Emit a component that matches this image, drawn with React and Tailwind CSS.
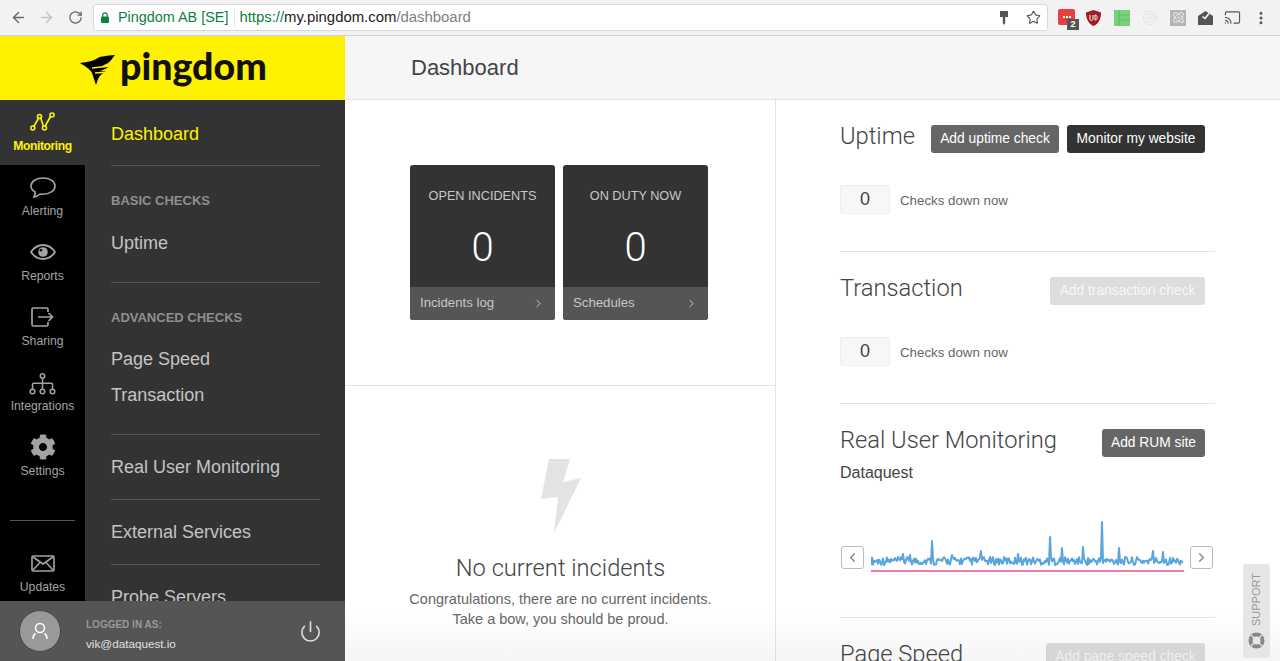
import React from "react";
import { ArrowLeft, ArrowRight, RotateCw, Star, ChevronLeft, ChevronRight, Power, MoreVertical, Cast, Atom, Target } from "lucide-react";
import { FaCog } from "react-icons/fa";

const SANS = "font-['Liberation_Sans',Arial,sans-serif]";

// sparkline data: steady noise plus the big spikes (keys are x offsets)
const spikes = { 32: 14, 39: 13, 61: 27, 81: 13, 110: 17, 147: 14, 179: 31, 191: 20, 212: 21, 231: 46, 248: 20, 282: 17, 292: 16 };
const sparkPoints = [];
for (let i = 0; i < 313; i++) {
  const n = Math.abs(Math.sin(i * 12.9898) * 43758.5453) % 1;
  const h = spikes[i] || 3 + n * 8;
  sparkPoints.push(i + "," + (48 - h).toFixed(1));
}
const sparkPath = sparkPoints.join(" ");

function MonitoringIcon() {
  return (
    <svg width="26" height="20" viewBox="0 0 26 20" fill="none" stroke="currentColor" strokeWidth="1.6">
      <path d="M3.5 15 L9 5.5 M10.5 5.5 L13.5 14.5 M15 14.5 L20.5 4.5" />
      <circle cx="2.8" cy="16" r="2" />
      <circle cx="9.5" cy="4.5" r="2" />
      <circle cx="14.5" cy="16" r="2" />
      <circle cx="22" cy="3" r="2" />
    </svg>
  );
}

function BubbleIcon() {
  return (
    <svg width="26" height="21" viewBox="0 0 26 21" fill="none" stroke="currentColor" strokeWidth="1.6">
      <path d="M13 1C6.5 1 1 4.3 1 9c0 2.7 1.8 4.800 4.300 6.200 0 1.800-.5 3.300-1.300 4.800 2.500-.5 4.500-1.500 6-3 1 .2 2 .3 3 .3 6.500 0 12-3.500 12-8.300S19.500 1 13 1z" />
    </svg>
  );
}

function EyeIcon() {
  return (
    <svg width="26" height="16" viewBox="0 0 26 16" fill="none">
      <path d="M1 8c3-4.500 7-7 12-7s9 2.500 12 7c-3 4.500-7 7-12 7S4 12.500 1 8z" stroke="currentColor" strokeWidth="1.8" />
      <circle cx="13" cy="8" r="4.800" fill="currentColor" />
      <circle cx="11" cy="6.300" r="1.300" fill="#000" />
    </svg>
  );
}

function ShareIcon() {
  return (
    <svg width="23" height="20" viewBox="0 0 23 20" fill="none" stroke="currentColor" strokeWidth="1.7">
      <path d="M17 5V2.500C17 1.600 16.400 1 15.500 1H2.500C1.600 1 1 1.600 1 2.500v15C1 18.400 1.600 19 2.500 19h13c.9 0 1.500-.6 1.500-1.500V15" />
      <path d="M7 10h14.500M17.500 6l4 4-4 4" />
    </svg>
  );
}

function NetworkIcon() {
  return (
    <svg width="27" height="22" viewBox="0 0 27 22" fill="none" stroke="currentColor" strokeWidth="1.500" className="mt-[4px]">
      <circle cx="13.500" cy="3" r="2.200" />
      <path d="M13.500 5.200V16M3.500 16v-4.500c0-.8.500-1.300 1.300-1.300h17.400c.8 0 1.300.5 1.300 1.300V16" />
      <circle cx="3.500" cy="18.500" r="2.300" />
      <circle cx="13.500" cy="18.500" r="2.300" />
      <circle cx="23.500" cy="18.500" r="2.300" />
    </svg>
  );
}

function EnvelopeIcon() {
  return (
    <svg width="24" height="17" viewBox="0 0 24 17" fill="none" stroke="currentColor" strokeWidth="1.600">
      <rect x="1" y="1" width="22" height="15" rx="1" />
      <path d="M2 2l10 7 10-7M2 15l7-7.500M22 15l-7-7.500" />
    </svg>
  );
}

function RailItem({ icon, label, active }) {
  return (
    <div className={`h-[65px] flex flex-col items-center ${active ? "bg-[#333333] text-[#fff200]" : "text-[#a3a3a3]"}`}>
      <div className="h-[39px] pt-[6px] pb-[1px] flex items-center justify-center">{icon}</div>
      <div className={`text-[12.2px] leading-[15px] ${active ? "font-bold tracking-[-0.45px]" : ""}`}>{label}</div>
    </div>
  );
}

function NavRow({ children }) {
  return <div className="h-[36px] pt-[1px] flex items-center text-[18px] text-[#c4c4c4]">{children}</div>;
}

function NavLabel({ children }) {
  return <div className="mt-[16px] h-[36px] pt-[1px] flex items-center text-[13px] font-bold text-[#8f8f8f]">{children}</div>;
}

function StatCard({ title, link }) {
  return (
    <div className="w-[145px] h-[155px] rounded-[3px] overflow-hidden bg-[#333333] flex flex-col">
      <div className="h-[122px] flex flex-col items-center">
        <div className="mt-[23px] text-[12.7px] leading-[17px] text-[#c8c8c8]">{title}</div>
        <div className="mt-[20px] text-[40px] leading-[46px] text-white font-['Roboto',sans-serif] font-light">0</div>
      </div>
      <div className="flex-1 bg-[#555555] pb-[1px] flex items-center justify-between pl-[10px] pr-[10px] text-[13.2px] text-[#c8c8c8]">
        {link}
        <ChevronRight size={13} strokeWidth={1.8} />
      </div>
    </div>
  );
}

function PanelHead({ title, children }) {
  return (
    <div className="h-[28px] pr-[10px] flex items-center">
      <div className="-mt-[5px] text-[23.7px] text-[#444444] font-['Roboto',sans-serif] font-light whitespace-nowrap">{title}</div>
      {children}
    </div>
  );
}

function Btn({ children, color, className }) {
  return (
    <div className={`h-[28px] pt-[1px] rounded-[3px] flex items-center justify-center text-[13.8px] whitespace-nowrap ${color} ${className || ""}`}>
      {children}
    </div>
  );
}

function ChecksDown() {
  return (
    <div className="mt-[32px] flex items-center">
      <div className="w-[50px] h-[29px] rounded-[2px] bg-[#f7f7f7] border border-[#eeeeee] flex items-center justify-center text-[18px] text-[#444444]">0</div>
      <div className="ml-[10px] pt-[2px] text-[13.3px] text-[#666666]">Checks down now</div>
    </div>
  );
}

function ArrowBox({ children, className }) {
  return (
    <div className={`w-[23px] h-[23px] mt-[26px] border border-[#bbbbbb] rounded-[3px] flex items-center justify-center text-[#888888] ${className}`}>
      {children}
    </div>
  );
}

export default function App() {
  return (
    <div className={`relative h-[661px] w-full overflow-hidden flex flex-col bg-white ${SANS}`}>
      {/* browser bar */}
      <div className="h-[36px] shrink-0 bg-[#f2f2f2] border-b border-[#d4d4d4] flex items-center">
        <ArrowLeft size={17} strokeWidth={2} className="ml-[10px] text-[#666666]" />
        <ArrowRight size={17} strokeWidth={2} className="ml-[11px] text-[#c4c4c4]" />
        <RotateCw size={15} strokeWidth={2} className="ml-[13px] text-[#666666]" />
        <div className="ml-[10px] w-[955px] h-[27px] bg-white border border-[#d8d8d8] rounded-[3px] flex items-center">
          <svg width="8" height="11" viewBox="0 0 8 11" className="ml-[7px]">
            <rect x="0" y="4.500" width="8" height="6.500" rx="1" fill="#0b8043" />
            <path d="M1.800 5V3a2.200 2.200 0 0 1 4.400 0v2" fill="none" stroke="#0b8043" strokeWidth="1.200" />
          </svg>
          <span className="ml-[9px] text-[14.4px] text-[#0b8043]">Pingdom AB [SE]</span>
          <span className="ml-[6px] h-[18px] border-l border-[#e4e4e4]"></span>
          <span className="ml-[4px] text-[14.900px] text-[#0b8043]">https://</span>
          <span className="text-[14.900px] text-[#222222]">my.pingdom.com</span>
          <span className="text-[14.900px] text-[#808080]">/dashboard</span>
          <div className="ml-auto flex items-center">
            <svg width="8" height="14" viewBox="0 0 8 14" className="mr-[18px]">
              <path d="M0 0h8v6H5.200v6L4 14l-1.200-2V6H0z" fill="#555555" />
            </svg>
            <Star size={15} strokeWidth={1.8} className="mr-[6px] text-[#555555]" />
          </div>
        </div>
        <div className="relative ml-[10px] w-[17px] h-[16px] -mt-[2px] rounded-[2px] bg-[#e53f3f] flex items-center justify-center gap-[1px]">
          <span className="w-[2px] h-[2px] bg-white"></span>
          <span className="w-[2px] h-[2px] bg-white"></span>
          <span className="w-[2px] h-[2px] bg-white"></span>
          <div className="absolute -right-[4px] -bottom-[5px] w-[12px] h-[11px] bg-[#555555] text-white text-[9px] leading-[11px] text-center font-bold">2</div>
        </div>
        <svg width="15" height="16" viewBox="0 0 15 16" className="ml-[11px]">
          <path d="M7.500 0L15 2.500c0 6-2 11-7.500 13.500C2 13.500 0 8.500 0 2.500z" fill="#a11d21" />
          <path d="M4 5v4c0 2 3 2 3 0V5M9 5v5c3 0 3-5 0-5z" stroke="#fff" strokeWidth="1" fill="none" />
        </svg>
        <svg width="16" height="16" viewBox="0 0 16 16" className="ml-[13px]">
          <rect width="16" height="16" fill="#78d17f" />
          <path d="M5 0v16M5 5h11M5 10h11" stroke="#5fb868" strokeWidth="1" />
        </svg>
        <Target size={16} strokeWidth={1.3} className="ml-[12px] text-[#e2e2e2]" />
        <div className="ml-[12px] w-[16px] h-[16px] bg-[#b5b5b5] flex items-center justify-center">
          <Atom size={13} strokeWidth={1.3} className="text-white" />
        </div>
        <svg width="15" height="14" viewBox="0 0 15 14" className="ml-[12px]">
          <path d="M0 5L7.500 0 15 5v9H0z" fill="#555555" />
          <path d="M4.500 5.500l2.500 2 4-5" fill="none" stroke="#ffffff" strokeWidth="1.500" />
        </svg>
        <Cast size={17} strokeWidth={1.6} className="ml-[11px] text-[#555555]" />
        <MoreVertical size={16} strokeWidth={2.5} className="ml-[12px] text-[#555555]" />
      </div>

      <div className="flex-1 flex min-h-0">
        {/* sidebar */}
        <div className="w-[345px] shrink-0 flex flex-col">
          <div className="h-[64px] shrink-0 bg-[#fff200] flex items-center pl-[80px]">
            <svg width="36" height="30" viewBox="0 0 36 30" className="mt-[4px]">
              <path d="M0 8C8 7 13 6 18 3c3-2 9-2 17-3-3 3-4 7-9 9l-6 3 10-1c-3 2-6 4-10 5l6 0c-3 2-6 4-8 8l-2 6-4-12C10 14 5 11 0 8z" fill="#000000" />
              <path d="M12 13l19-2M15 18l13-1" stroke="#fff200" strokeWidth="1.300" />
            </svg>
            <span className="ml-[4px] -mt-[4px] font-['Lato',sans-serif] font-black text-[37.5px] leading-[46px] text-[#111111]">pingdom</span>
          </div>
          <div className="flex-1 min-h-0 flex overflow-hidden">
            <div className="w-[85px] shrink-0 bg-black">
              <RailItem active label="Monitoring" icon={<MonitoringIcon />} />
              <RailItem label="Alerting" icon={<BubbleIcon />} />
              <RailItem label="Reports" icon={<EyeIcon />} />
              <RailItem label="Sharing" icon={<ShareIcon />} />
              <RailItem label="Integrations" icon={<NetworkIcon />} />
              <RailItem label="Settings" icon={<FaCog size={26} />} />
              <div className="mx-[10px] mt-[30px] border-t border-[#555555]"></div>
              <div className="mt-[20px]">
                <RailItem label="Updates" icon={<EnvelopeIcon />} />
              </div>
            </div>
            <div className="flex-1 bg-[#333333] pl-[26px] pr-[25px]">
              <div className="h-[66px] pt-[3px] border-b border-[#555555] flex items-center text-[18px] text-[#fff200]">Dashboard</div>
              <div className="pb-[21px] border-b border-[#555555]">
                <NavLabel>BASIC CHECKS</NavLabel>
                <div className="mt-[7px]"><NavRow>Uptime</NavRow></div>
              </div>
              <div className="pb-[21px] border-b border-[#555555]">
                <NavLabel>ADVANCED CHECKS</NavLabel>
                <div className="mt-[6px]"><NavRow>Page Speed</NavRow></div>
                <NavRow>Transaction</NavRow>
              </div>
              <div className="h-[65px] border-b border-[#555555] flex items-center text-[18px] text-[#c4c4c4]">Real User Monitoring</div>
              <div className="h-[65px] border-b border-[#555555] flex items-center text-[18px] text-[#c4c4c4]">External Services</div>
              <div className="h-[65px] flex items-center text-[18px] text-[#c4c4c4]">Probe Servers</div>
            </div>
          </div>
          <div className="h-[60px] shrink-0 bg-[#555555] flex items-center">
            <div className="ml-[19px] w-[42px] h-[42px] rounded-full bg-[#999999] border border-[#444444] flex items-center justify-center">
              <svg width="18" height="18" viewBox="0 0 18 18" fill="none" stroke="#ffffff" strokeWidth="1.500">
                <circle cx="9" cy="6" r="4.500" />
                <path d="M2 17c0-3 .8-4.500 2.500-5.500M16 17c0-3-.8-4.500-2.500-5.500" />
              </svg>
            </div>
            <div className="ml-[25px] pt-[6px]">
              <div className="text-[10px] font-bold text-[#999999] leading-[13px]">LOGGED IN AS:</div>
              <div className="mt-[5px] text-[11.7px] text-[#e0e0e0] leading-[15px]">vik@dataquest.io</div>
            </div>
            <Power size={23} strokeWidth={1.7} className="ml-auto mr-[23px] text-[#dddddd]" />
          </div>
        </div>

        {/* main */}
        <div className="flex-1 flex flex-col min-w-0">
          <div className="h-[64px] shrink-0 bg-[#f6f6f6] border-b border-[#e4e4e4] pl-[66px] flex items-center text-[22px] text-[#444444]">Dashboard</div>
          <div className="flex-1 flex min-h-0">
            <div className="w-[431px] shrink-0 border-r border-[#e4e4e4]">
              <div className="h-[286px] border-b border-[#e4e4e4] pt-[65px] pl-[65px] flex gap-[8px]">
                <StatCard title="OPEN INCIDENTS" link="Incidents log" />
                <StatCard title="ON DUTY NOW" link="Schedules" />
              </div>
              <div className="flex flex-col items-center pl-[1px] text-center">
                <svg width="41" height="75" viewBox="0 0 41 75" className="mt-[73px] ml-[2px]">
                  <path d="M8 0h21l-7 23 18-4-27 55 4-36-17 2z" fill="#e3e3e3" />
                </svg>
                <div className="mt-[19px] text-[23.7px] leading-[30px] text-[#444444] font-['Roboto',sans-serif] font-light">No current incidents</div>
                <div className="mt-[6px] text-[14.500px] leading-[20px] text-[#666666]">
                  Congratulations, there are no current incidents.<br />Take a bow, you should be proud.
                </div>
              </div>
            </div>
            <div className="flex-1 pl-[64px] pr-[65px] overflow-hidden">
              <div className="pt-[25px] pb-[37px] border-b border-[#e4e4e4]">
                <PanelHead title="Uptime">
                  <Btn color="bg-[#666666] text-white" className="ml-auto w-[128px]">Add uptime check</Btn>
                  <Btn color="bg-[#333333] text-white" className="ml-[8px] w-[138px]">Monitor my website</Btn>
                </PanelHead>
                <ChecksDown />
              </div>
              <div className="pt-[25px] pb-[37px] border-b border-[#e4e4e4]">
                <PanelHead title="Transaction">
                  <Btn color="bg-[#dddddd] text-[#f7f7f7]" className="ml-auto w-[155px]">Add transaction check</Btn>
                </PanelHead>
                <ChecksDown />
              </div>
              <div className="pt-[25px] pb-[45px] border-b border-[#e4e4e4]">
                <PanelHead title="Real User Monitoring">
                  <Btn color="bg-[#666666] text-white" className="ml-auto w-[103px]">Add RUM site</Btn>
                </PanelHead>
                <div className="mt-[7px] h-[18px] text-[16px] leading-[18px] text-[#444444]">Dataquest</div>
                <div className="mt-[38px] flex items-start">
                  <ArrowBox className="ml-[1px]"><ChevronLeft size={15} strokeWidth={2.2} /></ArrowBox>
                  <svg width="313" height="52" viewBox="0 0 313 52" className="ml-[7px]">
                    <polyline points={sparkPath} fill="none" stroke="#5aa5dc" strokeWidth="2" strokeLinejoin="round" />
                    <rect x="0" y="50" width="313" height="2" fill="#f27aa8" />
                  </svg>
                  <ArrowBox className="ml-[6px]"><ChevronRight size={15} strokeWidth={2.2} /></ArrowBox>
                </div>
              </div>
              <div className="pt-[25px]">
                <PanelHead title="Page Speed">
                  <Btn color="bg-[#dddddd] text-[#f7f7f7]" className="ml-auto w-[159px]">Add page speed check</Btn>
                </PanelHead>
              </div>
            </div>
          </div>
        </div>
      </div>

      {/* bottom fade over the content */}
      <div className="pointer-events-none absolute bottom-0 left-[345px] right-0 h-[50px] bg-gradient-to-b from-transparent to-[#0000000a]"></div>

      {/* support tab */}
      <div className="absolute right-[10px] bottom-[3px] w-[27px] h-[94px] rounded-[3px] bg-[#e6e6e6] flex flex-col items-center">
        <div className="mt-[10px] h-[52px] [writing-mode:vertical-rl] rotate-180 text-[11px] leading-[27px] text-[#999999]">SUPPORT</div>
        <svg width="17" height="17" viewBox="0 0 17 17" className="mt-[6px]" fill="none">
          <circle cx="8.500" cy="8.500" r="6" stroke="#888888" strokeWidth="4" />
          <path d="M3 3l3 3M14 3l-3 3M3 14l3-3M14 14l-3-3" stroke="#e6e6e6" strokeWidth="1.200" />
        </svg>
      </div>
    </div>
  );
}
